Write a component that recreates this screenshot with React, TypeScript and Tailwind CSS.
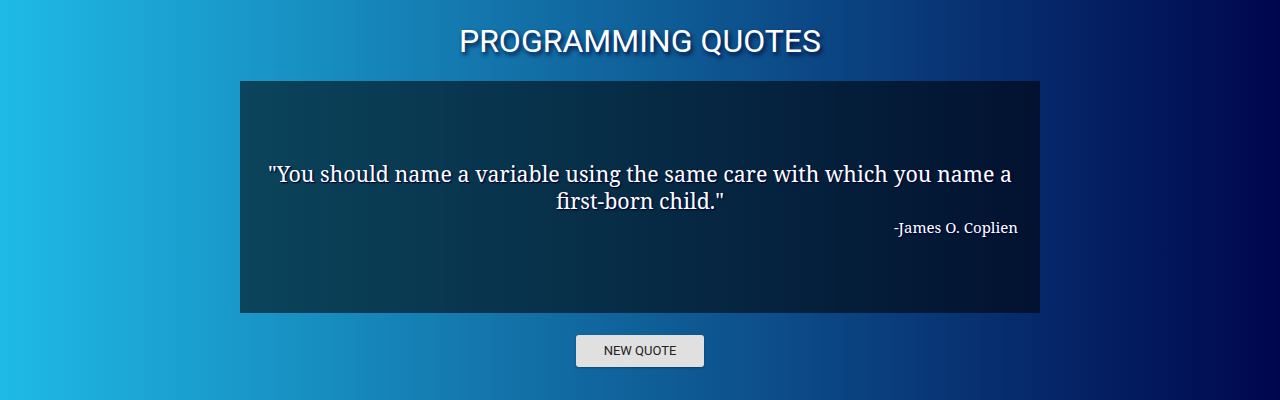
export default function App() {
  return (
    <div className="min-h-[400px] w-full bg-linear-to-r/srgb from-[#1fbae6] to-[#00064d] flex flex-col items-center font-['Roboto',sans-serif]">
      <h1 className="mt-[22px] text-[32px] leading-[38px] text-white [text-shadow:2px_3px_4px_rgba(0,10,60,0.9)]">
        PROGRAMMING QUOTES
      </h1>
      <div className="mt-[21px] w-[800px] h-[232px] bg-black/55 flex flex-col justify-center px-[22px] pt-[3px] text-white font-['Noto_Serif','DejaVu_Serif',serif] [text-shadow:1px_1px_0_#010838,1px_1px_2px_#010838]">
        <p className="text-center text-[21.4px] leading-[27px]">
          "You should name a variable using the same care with which you name a first-born child."
        </p>
        <p className="text-right text-[15px] leading-[22px] mt-[2px]">-James O. Coplien</p>
      </div>
      <button className="mt-[22px] w-[128px] h-[32px] rounded-[3px] bg-[#e0e0e0] text-[13px] text-[#222] shadow-[0_1px_2px_rgba(0,0,0,0.3)]">
        NEW QUOTE
      </button>
    </div>
  )
}
